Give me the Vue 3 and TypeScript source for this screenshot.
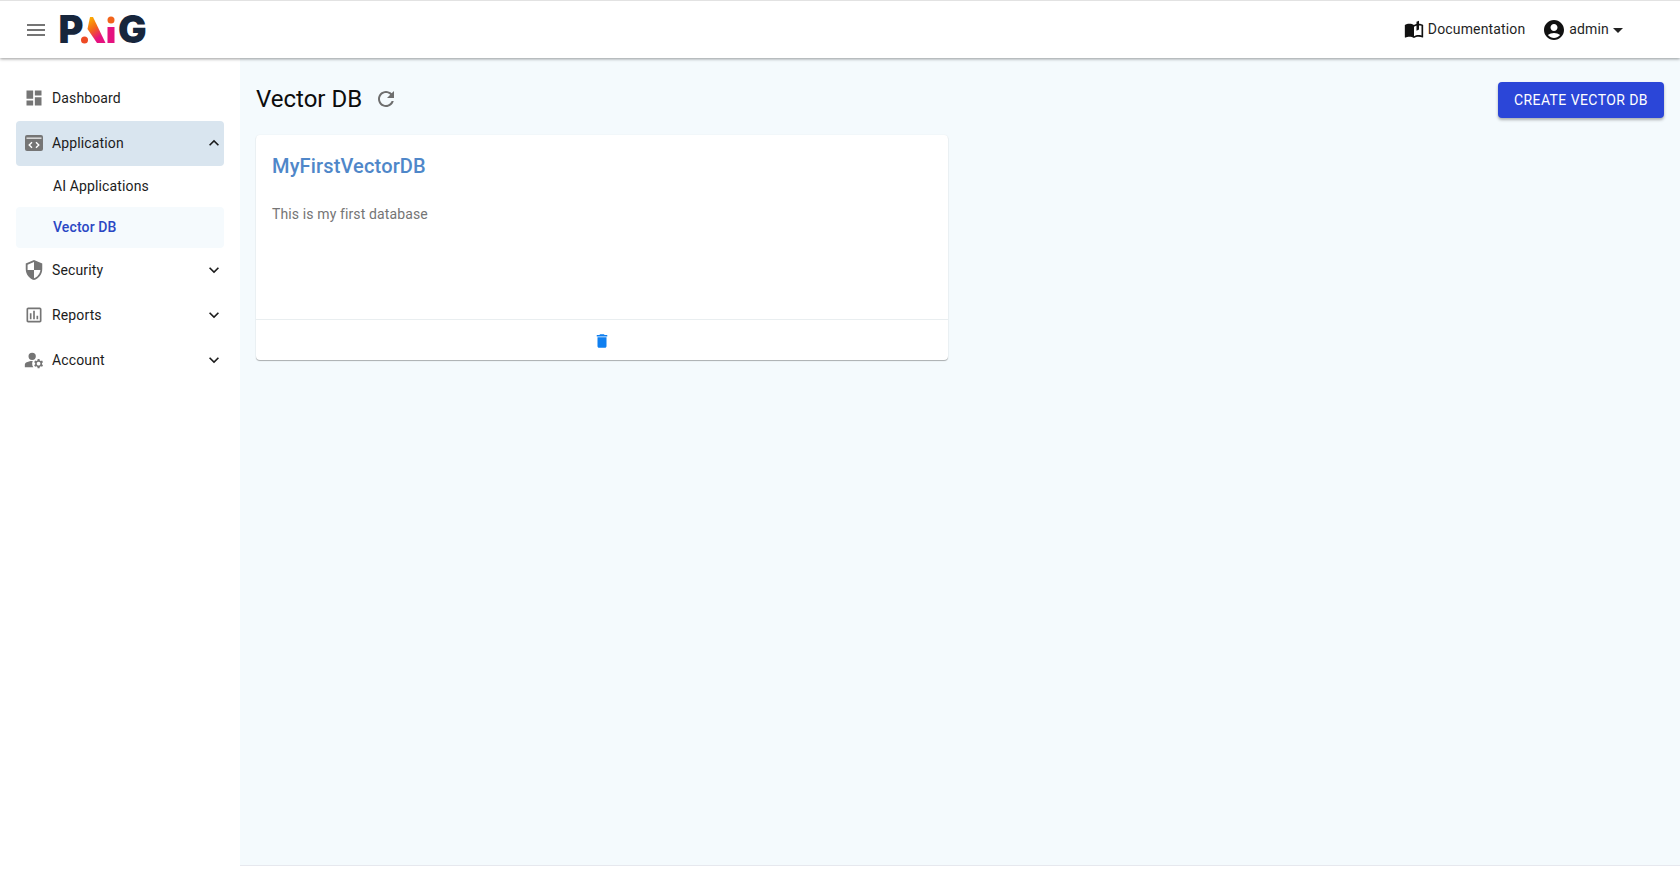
<script setup lang="ts">
interface NavItem { label: string; icon: string; size: string; arrow?: 'up' | 'down'; active?: boolean }
const before: NavItem[] = [
  { label: 'Dashboard', size: 'normal', icon: 'M3 13h8V3H3v10zm0 8h8v-6H3v6zm10 0h8V11h-8v10zm0-18v6h8V3h-8z' },
]
const after: NavItem[] = [
  { label: 'Security', size: 'big', icon: 'M12 1 3 5v6c0 5.55 3.84 10.74 9 12 5.16-1.26 9-6.45 9-12V5l-9-4zm0 10.99h7c-.53 4.12-3.28 7.79-7 8.94V12H5V6.3l7-3.11v8.8z', arrow: 'down' },
  { label: 'Reports', size: 'normal', icon: 'M19 3H5c-1.1 0-2 .9-2 2v14c0 1.1.9 2 2 2h14c1.1 0 2-.9 2-2V5c0-1.1-.9-2-2-2zm0 16H5V5h14v14zM7 10h2v7H7zm4-3h2v10h-2zm4 6h2v4h-2z', arrow: 'down' },
  { label: 'Account', size: 'big', icon: 'M10 4a4 4 0 1 0 0 8 4 4 0 0 0 0-8zM10.67 13.02C10.45 13.01 10.23 13 10 13c-2.42 0-4.68.67-6.61 1.82C2.51 15.34 2 16.32 2 17.35V20h9.26c-.79-1.13-1.26-2.51-1.26-4 0-1.07.25-2.07.67-2.98zM20.75 16c0-.22-.03-.42-.06-.63l1.14-1.01-1-1.73-1.45.49c-.32-.27-.68-.48-1.08-.63L18 11h-2l-.3 1.49c-.4.15-.76.36-1.08.63l-1.45-.49-1 1.73 1.14 1.01c-.03.21-.06.41-.06.63s.03.42.06.63l-1.14 1.01 1 1.73 1.45-.49c.32.27.68.48 1.08.63L16 21h2l.3-1.49c.4-.15.76-.36 1.08-.63l1.45.49 1-1.73-1.14-1.01c.03-.21.06-.41.06-.63zM17 18c-1.1 0-2-.9-2-2s.9-2 2-2 2 .9 2 2-.9 2-2 2z', arrow: 'down' },
]
const chevronUp = 'M12 8l-6 6 1.41 1.41L12 10.83l4.59 4.58L18 14z'
const chevronDown = 'M16.59 8.59 12 13.17 7.41 8.59 6 10l6 6 6-6z'
</script>

<template>
  <div class="page">
    <header class="topbar">
      <div class="brand">
        <svg class="menu" viewBox="0 0 24 24"><path d="M3 18h18v-2H3v2zm0-5h18v-2H3v2zm0-7v2h18V6H3z" /></svg>
        <svg class="logo" width="90" height="32" viewBox="0 0 90 32">
          <defs>
            <linearGradient id="lg" x1="0.1" y1="0" x2="0.6" y2="1">
              <stop offset="0" stop-color="#fdb400" />
              <stop offset="0.45" stop-color="#f4661a" />
              <stop offset="0.85" stop-color="#e5127f" />
            </linearGradient>
          </defs>
          <text x="-1.5" y="29" class="logo-letter">P</text>
          <circle cx="24.5" cy="26" r="3.5" fill="#ee4a24" />
          <polygon points="30,3 33,3 45.5,29 37,29 27.5,15" fill="url(#lg)" />
          <circle cx="51" cy="6" r="3.5" fill="#f2641a" />
          <rect x="47.5" y="13" width="7" height="16" fill="#e5127f" />
          <text x="58" y="29" class="logo-letter">G</text>
        </svg>
      </div>
      <div class="top-actions">
        <div class="doc">
          <svg class="doc-icon" viewBox="0 0 24 24"><path d="M21 5c-1.11-.35-2.33-.5-3.5-.5-1.95 0-4.05.4-5.5 1.5-1.45-1.1-3.55-1.5-5.5-1.5S2.45 4.9 1 6v14.65c0 .25.25.5.5.5.1 0 .15-.05.25-.05C3.1 20.45 5.05 20 6.5 20c1.95 0 4.05.4 5.5 1.5 1.35-.85 3.8-1.5 5.5-1.5 1.65 0 3.35.3 4.75 1.05.1.05.15.05.25.05.25 0 .5-.25.5-.5V6c-.6-.45-1.25-.75-2-1zm0 13.5c-1.1-.35-2.3-.5-3.5-.5-1.7 0-4.15.65-5.5 1.5V8c1.35-.85 3.8-1.5 5.5-1.5 1.2 0 2.4.15 3.5.5v11.5z" /><path d="M15 2v11l3-1.5V1z" /></svg>
          <span>Documentation</span>
        </div>
        <div class="user">
          <svg class="user-icon" viewBox="0 0 24 24"><path d="M12 2C6.48 2 2 6.48 2 12s4.48 10 10 10 10-4.48 10-10S17.52 2 12 2zm0 4c1.93 0 3.5 1.57 3.5 3.5S13.93 13 12 13s-3.5-1.57-3.5-3.5S10.07 6 12 6zm0 14c-2.03 0-4.43-.82-6.14-2.88C7.55 15.8 9.68 15 12 15s4.45.8 6.14 2.12C16.43 19.18 14.03 20 12 20z" /></svg>
          <span>admin</span>
          <svg class="caret" viewBox="0 0 24 24"><path d="M7 10l5 5 5-5z" /></svg>
        </div>
      </div>
    </header>

    <div class="body">
      <aside class="sidebar">
        <div v-for="item in before" :key="item.label" class="nav-row">
          <svg class="nav-icon" :class="item.size" viewBox="0 0 24 24"><path :d="item.icon" /></svg>
          <span class="nav-label">{{ item.label }}</span>
        </div>
        <div class="nav-row active">
          <svg class="nav-icon app" viewBox="0 0 24 24">
            <rect x="3" y="4" width="18" height="16" rx="2" fill="#757575" />
            <rect x="4.5" y="6.6" width="15" height="1.1" fill="#fff" />
            <path d="M10 11.2 7.2 14l2.8 2.8M14 11.2l2.8 2.8-2.8 2.8" fill="none" stroke="#fff" stroke-width="1.4" />
          </svg>
          <span class="nav-label">Application</span>
          <svg class="chev" viewBox="0 0 24 24"><path :d="chevronUp" /></svg>
        </div>
        <div class="sub-row">AI Applications</div>
        <div class="sub-row current">Vector DB</div>
        <div v-for="item in after" :key="item.label" class="nav-row">
          <svg class="nav-icon" :class="item.size" viewBox="0 0 24 24"><path :d="item.icon" /></svg>
          <span class="nav-label">{{ item.label }}</span>
          <svg class="chev" viewBox="0 0 24 24"><path :d="chevronDown" /></svg>
        </div>
      </aside>

      <main class="main">
        <div class="title-row">
          <div class="title-left">
            <h1>Vector DB</h1>
            <svg class="refresh" viewBox="0 0 24 24"><path d="M17.65 6.35C16.2 4.9 14.21 4 12 4c-4.42 0-7.99 3.58-7.99 8s3.57 8 7.99 8c3.73 0 6.84-2.55 7.73-6h-2.08c-.82 2.33-3.04 4-5.65 4-3.31 0-6-2.69-6-6s2.69-6 6-6c1.66 0 3.14.69 4.22 1.78L13 11h7V4l-2.35 2.35z" /></svg>
          </div>
          <button class="create" type="button">CREATE VECTOR DB</button>
        </div>

        <section class="card">
          <div class="card-body">
            <h2>MyFirstVectorDB</h2>
            <p>This is my first database</p>
          </div>
          <div class="card-foot">
            <svg class="trash" viewBox="0 0 24 24"><path d="M6 19c0 1.1.9 2 2 2h8c1.1 0 2-.9 2-2V7H6v12zM19 4h-3.5l-1-1h-5l-1 1H5v2h14V4z" /></svg>
          </div>
        </section>
      </main>
    </div>
  </div>
</template>

<style>
html, body { margin: 0; background: #fff; }
</style>

<style scoped>
.page {
  height: 870px;
  display: flex;
  flex-direction: column;
  font-family: Roboto, "Liberation Sans", sans-serif;
  background: #fff;
  overflow: hidden;
}
.topbar {
  position: relative;
  z-index: 2;
  height: 57px;
  flex: none;
  border-top: 1px solid #e2e2e2;
  background: #fff;
  box-shadow: 0 1px 3px rgba(0, 0, 0, 0.4);
  display: flex;
  align-items: center;
  justify-content: space-between;
}
.brand { display: flex; align-items: center; padding-left: 24px; }
.menu { width: 24px; height: 24px; fill: #757575; }
.logo { margin-left: 12px; overflow: visible; }
.logo-letter {
  font-family: Inter, "DejaVu Sans", sans-serif;
  font-weight: 900;
  font-size: 38px;
  fill: #17263c;
}
.top-actions { display: flex; align-items: center; padding-right: 50px; }
.top-actions span { margin-top: -2px; }
.doc { display: flex; align-items: center; font-size: 14px; letter-spacing: 0.15px; color: #1f1f1f; }
.doc-icon { width: 20px; height: 20px; fill: #111; margin-right: 4px; }
.user { display: flex; align-items: center; margin-left: 17px; font-size: 14px; letter-spacing: 0.15px; color: #1f1f1f; }
.user-icon { width: 24px; height: 24px; fill: #111; margin-right: 3px; }
.caret { width: 24px; height: 24px; fill: #222; margin-left: -3px; }

.body { flex: 1; display: flex; height: 812px; }
.sidebar {
  width: 208px;
  flex: none;
  padding: 18px 16px 0;
  background: #fff;
}
.nav-row {
  height: 45px;
  display: flex;
  align-items: center;
  padding: 0 0 2px 8px;
  border-radius: 4px;
  box-sizing: border-box;
  color: #1c1c1c;
}
.nav-row.active { background: #d9e5ef; }
.nav-icon { width: 20px; height: 20px; fill: #757575; flex: none; }
.nav-icon.big { width: 22px; height: 22px; margin: 0 -1px; }
.nav-icon.app { width: 24px; height: 24px; margin: 0 -2px; }
.nav-label { margin-left: 8px; font-size: 14px; letter-spacing: 0.13px; flex: 1; }
.chev { width: 20px; height: 20px; fill: #1c1c1c; flex: none; }
.sub-row {
  height: 41px;
  display: flex;
  align-items: center;
  padding: 0 0 2px 37px;
  box-sizing: border-box;
  border-radius: 4px;
  font-size: 14px;
  letter-spacing: 0.13px;
  color: #1c1c1c;
}
.sub-row.current { background: #f5fafd; color: #2a47c4; font-weight: 500; }

.main {
  flex: 1;
  height: 808px;
  background: #f4fafd;
  border-bottom: 1px solid #e6e8ee;
  padding: 18px 16px 0;
  box-sizing: border-box;
  min-width: 0;
}
.title-row { display: flex; align-items: center; justify-content: space-between; height: 42px; margin-top: 2px; margin-bottom: 15px; }
.title-left { display: flex; align-items: center; }
h1 { margin: 0; font-size: 24px; font-weight: 400; color: #0c0c0c; letter-spacing: 0; }
.refresh { width: 24px; height: 24px; fill: #6e6e6e; margin-left: 12px; }
.create {
  width: 166px;
  height: 36px;
  margin-top: 2px;
  border: 0;
  border-radius: 4px;
  background: #2b46d8;
  color: #fff;
  font: 400 14px Roboto, "Liberation Sans", sans-serif;
  letter-spacing: 0.42px;
  box-shadow: 0 2px 3px rgba(0, 0, 0, 0.3);
  padding: 0;
}
.card {
  width: 692px;
  height: 225px;
  background: #fff;
  border-radius: 4px;
  box-shadow: 0 1px 1px rgba(0, 0, 0, 0.3), 0 0 2px rgba(0, 0, 0, 0.06);
  display: flex;
  flex-direction: column;
}
.card-body { height: 184px; padding: 16px; box-sizing: border-box; flex: none; }
h2 { margin: 0; font-size: 20px; line-height: 30px; font-weight: 500; color: #4f87c9; letter-spacing: 0.15px; }
p { margin: 23px 0 0; font-size: 14px; line-height: 20px; color: #757575; letter-spacing: 0.12px; }
.card-foot {
  flex: 1;
  border-top: 1px solid #e9eef0;
  padding-top: 2px;
  display: flex;
  align-items: center;
  justify-content: center;
}
.trash { width: 18px; height: 18px; fill: #0f7ff0; }
</style>
